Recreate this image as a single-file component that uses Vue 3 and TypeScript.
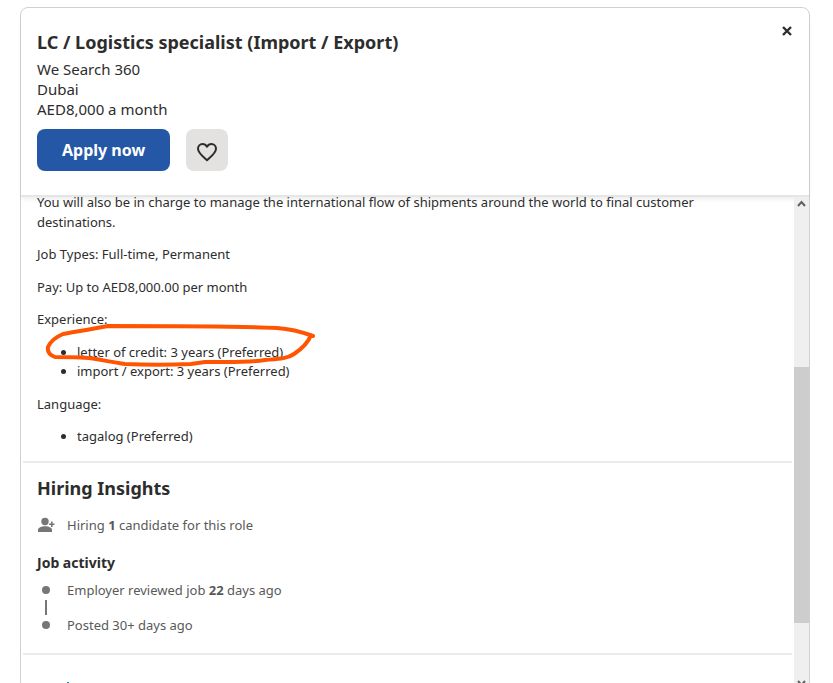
<script setup lang="ts">
interface Requirement {
  label: string
  items: string[]
}

const facts: string[] = ['Job Types: Full-time, Permanent', 'Pay: Up to AED8,000.00 per month']

const requirements: Requirement[] = [
  {
    label: 'Experience:',
    items: ['letter of credit: 3 years (Preferred)', 'import / export: 3 years (Preferred)'],
  },
  { label: 'Language:', items: ['tagalog (Preferred)'] },
]
</script>

<template>
  <main class="page">
    <article class="card">
      <header class="header">
        <div class="summary">
          <h1 class="title">LC / Logistics specialist (Import / Export)</h1>
          <p class="meta">We Search 360</p>
          <p class="meta">Dubai</p>
          <p class="meta">AED8,000 a month</p>
          <div class="actions">
            <button class="apply" type="button">Apply now</button>
            <button class="save" type="button" aria-label="Save job">
              <svg width="22" height="20" viewBox="0 0 22 20" fill="none" stroke="#2d2d2d" stroke-width="2" stroke-linejoin="round">
                <path d="M11 18.2 C6.5 14.2 2 11 2 6.8 C2 4 4 2 6.500 2 C8.400 2 10 3 11 4.700 C12 3 13.600 2 15.500 2 C18 2 20 4 20 6.800 C20 11 15.500 14.200 11 18.200 Z" />
              </svg>
            </button>
          </div>
        </div>
        <button class="close" type="button" aria-label="Close">
          <svg width="10" height="10" viewBox="0 0 10 10" stroke="#2d2d2d" stroke-width="2.400">
            <path d="M1 1 L9 9 M9 1 L1 9" />
          </svg>
        </button>
      </header>

      <div class="body">
        <div class="content">
          <section class="description">
            <p>
              You will also be in charge to manage the international flow of shipments around the world to final customer
              destinations.
            </p>
            <p v-for="fact in facts" :key="fact">{{ fact }}</p>
            <template v-for="(group, index) in requirements" :key="group.label">
              <p>{{ group.label }}</p>
              <div class="marked">
                <ul>
                  <li v-for="item in group.items" :key="item">{{ item }}</li>
                </ul>
                <svg v-if="index === 0" class="scribble" width="272" height="46" viewBox="0 0 272 46" fill="none" stroke="#ff5500" stroke-width="4" stroke-linecap="round" stroke-linejoin="round" aria-hidden="true">
                  <path d="M268 13 C257 9 247 6 232 5 C190 3 130 3 63 3 C48 6 35 8 18 11 C11 14 5 19 3 24 C2 29 5 32 10 34 C22 34 40 34 51 36 C62 38 72 40 80 41 C100 42 125 42 146 41 L160 39 C185 39 200 40 220 37 C232 36 242 36 249 31 C255 27 263 20 266 12" />
                </svg>
              </div>
            </template>
          </section>

          <section class="insights">
            <h2>Hiring Insights</h2>
            <p class="row">
              <span class="icon">
                <svg width="18" height="16" viewBox="0 0 18 16" fill="#767676">
                  <circle cx="8" cy="4.500" r="3.700" />
                  <path d="M1 15 V13 C1 10.500 4.500 9.300 8 9.300 C11.500 9.300 15 10.500 15 13 V15 Z" />
                  <path d="M14 4.500 h1.600 v1.900 h1.900 v1.600 h-1.900 v1.900 h-1.600 v-1.900 h-1.900 v-1.600 h1.900 Z" />
                </svg>
              </span>
              <span>Hiring <b>1</b> candidate for this role</span>
            </p>
            <h3>Job activity</h3>
            <ol class="timeline">
              <li class="row">
                <span class="icon"><i class="dot"></i></span>
                <span>Employer reviewed job <b>22</b> days ago</span>
              </li>
              <li class="link"></li>
              <li class="row">
                <span class="icon"><i class="dot"></i></span>
                <span>Posted 30+ days ago</span>
              </li>
            </ol>
          </section>

          <section class="next"><span class="tip"></span></section>
        </div>

        <div class="scrollbar" aria-hidden="true">
          <svg class="arrow" width="15" height="15" viewBox="0 0 15 15" fill="none" stroke="#606060" stroke-width="2">
            <path d="M4 9 L7.500 5 L11 9" />
          </svg>
          <div class="before"></div>
          <div class="thumb"></div>
          <div class="after"></div>
          <svg class="arrow" width="15" height="15" viewBox="0 0 15 15" fill="none" stroke="#606060" stroke-width="2">
            <path d="M4 7 L7.500 11 L11 7" />
          </svg>
        </div>
      </div>
    </article>
  </main>
</template>

<style>
body {
  margin: 0;
  background: #fff;
}
</style>

<style scoped>
.page {
  box-sizing: border-box;
  height: 100vh;
  overflow: hidden;
  padding: 7px 23px 0 20px;
  font-family: 'Noto Sans', 'Liberation Sans', sans-serif;
  color: #2d2d2d;
}

.card {
  box-sizing: border-box;
  display: flex;
  flex-direction: column;
  height: 100vh;
  border: 1px solid #d0d0d0;
  border-radius: 8px;
}

.header {
  display: flex;
  justify-content: space-between;
  align-items: flex-start;
  padding: 22px 16px 24px;
  border-bottom: 2px solid #e6e6e6;
  border-radius: 8px 8px 0 0;
  box-shadow: 0 3px 4px -1px rgba(0, 0, 0, 0.08);
}

h1,
h2,
h3,
p,
ul,
ol {
  margin: 0;
  padding: 0;
}

.title {
  margin-bottom: 4px;
  font-size: 18px;
  line-height: 25px;
  font-weight: 700;
}

.meta {
  font-size: 15px;
  line-height: 20px;
}

.actions {
  display: flex;
  gap: 16px;
  margin-top: 10px;
}

button {
  border: 0;
  padding: 0;
  font-family: inherit;
}

.apply {
  height: 42px;
  padding: 0 25px;
  border-radius: 8px;
  background: #2557a7;
  color: #fff;
  font-size: 16px;
  font-weight: 700;
}

.save {
  display: grid;
  place-items: center;
  width: 42px;
  height: 42px;
  padding-top: 3px;
  border-radius: 8px;
  background: #e4e2e0;
}

.close {
  display: grid;
  place-items: center;
  width: 12px;
  height: 12px;
  margin-top: -5px;
  background: none;
}

.body {
  display: flex;
  flex: 1;
  min-height: 0;
}

.content {
  flex: 1;
  min-width: 0;
  padding: 0 2px;
}

.description {
  padding: 0 60px 1px 14px;
  margin-top: -4px;
  font-size: 13px;
  line-height: 1.5;
}

.description p,
.marked {
  margin-bottom: 13px;
}

.marked {
  position: relative;
}

.marked ul {
  padding-left: 40px;
}

.scribble {
  position: absolute;
  left: 8px;
  top: -20px;
}

.insights {
  padding: 12px 14px 18px;
  border-top: 2px solid #ebebeb;
  border-bottom: 2px solid #ebebeb;
}

h2 {
  font-size: 18px;
  line-height: 26px;
  font-weight: 700;
}

.row {
  display: flex;
  align-items: center;
  gap: 12px;
  color: #595959;
  font-size: 13px;
  line-height: 20px;
}

h2 + .row {
  margin-top: 14px;
}

.icon {
  display: flex;
  justify-content: center;
  width: 18px;
}

h3 {
  margin: 18px 0 7px;
  font-size: 14px;
  line-height: 20px;
  font-weight: 700;
}

.timeline {
  list-style: none;
}

.dot {
  width: 8px;
  height: 8px;
  border-radius: 50%;
  background: #767676;
}

.link {
  width: 2px;
  height: 15px;
  margin-left: 8px;
  background: #767676;
}

.next {
  display: flex;
  padding: 27px 44px;
}

.tip {
  width: 2px;
  height: 2px;
  background: #2f86b8;
}

.scrollbar {
  display: flex;
  flex-direction: column;
  width: 15px;
  background: #efefef;
}

.arrow {
  flex: none;
}

.before {
  flex: 155;
}

.thumb {
  flex: 256;
  background: #cdcdcd;
}

.after {
  flex: 51;
}
</style>
